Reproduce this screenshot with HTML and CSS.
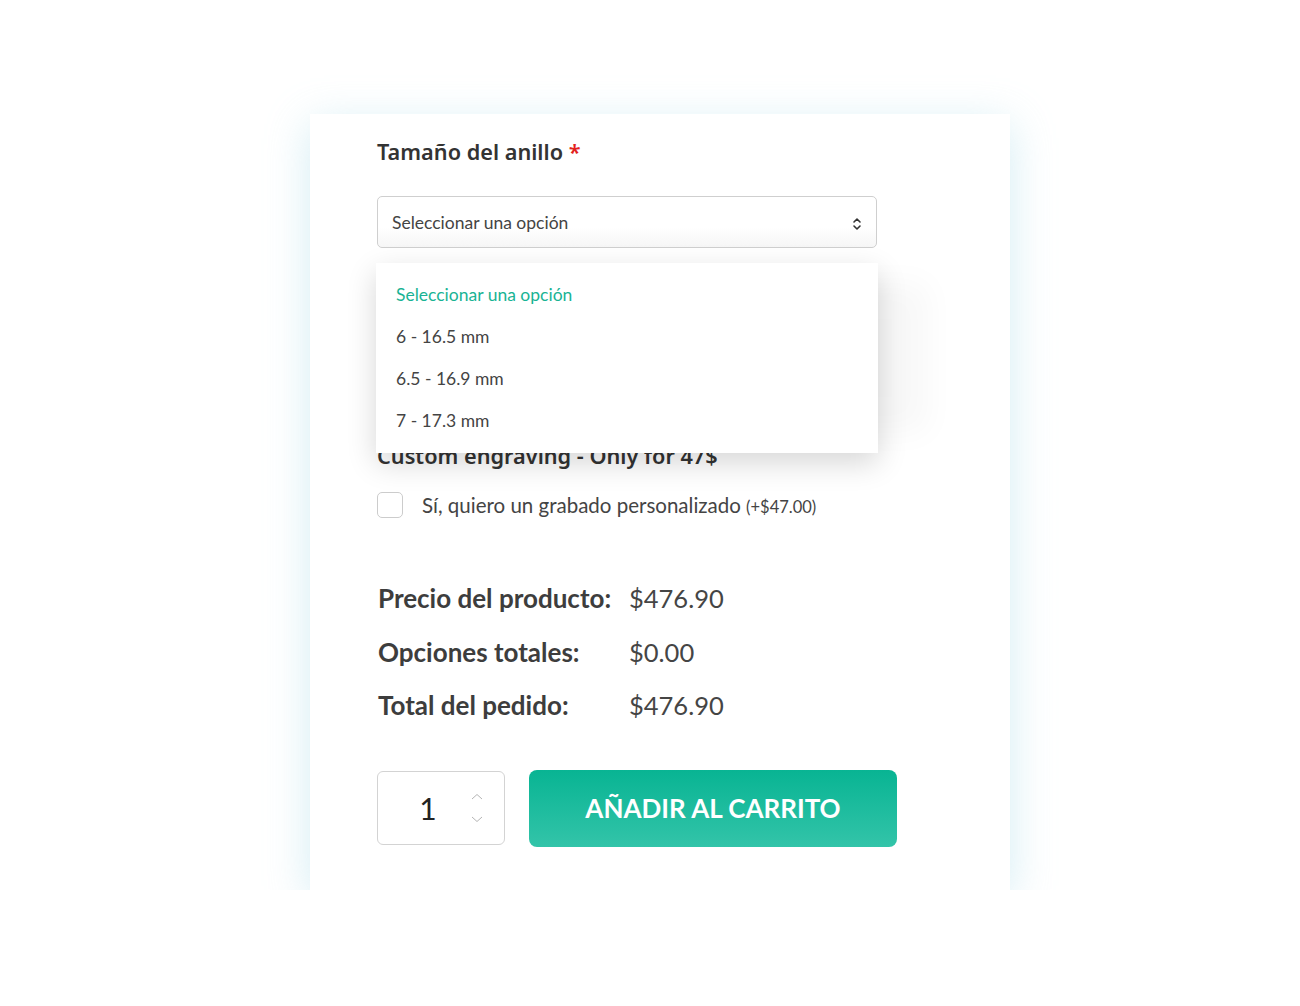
FILE: index.html
```html
<!DOCTYPE html>
<html lang="es">
<head>
  <meta charset="UTF-8" />
  <title>Tamaño del anillo</title>
  <link rel="stylesheet" href="styles.css">
</head>
<body>

  <div class="card">
    <h3 class="field-title">Tamaño del anillo <span class="req">*</span></h3>

    <div class="select-wrap">
      <div class="select-box">
        <span>Seleccionar una opción</span>
        <svg class="select-arrows" width="10" height="16" viewBox="0 0 10 16">
          <path d="M2 6 L5 3 L8 6" fill="none" stroke="#333" stroke-width="1.6" stroke-linecap="round" stroke-linejoin="round"/>
          <path d="M2 10 L5 13 L8 10" fill="none" stroke="#333" stroke-width="1.6" stroke-linecap="round" stroke-linejoin="round"/>
        </svg>
      </div>

      <ul class="dropdown">
        <li class="active">Seleccionar una opción</li>
        <li>6 - 16.5 mm</li>
        <li>6.5 - 16.9 mm</li>
        <li>7 - 17.3 mm</li>
      </ul>
    </div>

    <h3 class="field-title engraving">Custom engraving - Only for 47$</h3>

    <label class="check-row">
      <span class="checkbox"></span>
      <span>Sí, quiero un grabado personalizado <small>(+$47.00)</small></span>
    </label>

    <div class="totals">
      <div class="t-label">Precio del producto:</div>
      <div class="t-value">$476.90</div>
      <div class="t-label">Opciones totales:</div>
      <div class="t-value">$0.00</div>
      <div class="t-label">Total del pedido:</div>
      <div class="t-value">$476.90</div>
    </div>

    <div class="actions">
      <div class="qty">
        <span class="qty-num">1</span>
        <div class="spin">
          <svg width="12" height="8" viewBox="0 0 12 8"><path d="M1 6 L6 1.5 L11 6" fill="none" stroke="#b5b5b5" stroke-width="1"/></svg>
          <svg width="12" height="8" viewBox="0 0 12 8"><path d="M1 2 L6 6.5 L11 2" fill="none" stroke="#b5b5b5" stroke-width="1"/></svg>
        </div>
      </div>
      <button class="add-btn">AÑADIR AL CARRITO</button>
    </div>
  </div>

</body>
</html>
```

FILE: styles.css
```css
body {
  margin: 0;
  background: #fff;
  font-family: Lato, "Open Sans", sans-serif;
  color: #3d3d3d;
}

.card {
  box-sizing: border-box;
  width: 700px;
  height: 776px;
  margin: 114px 0 0 310px;
  padding: 24px 0 0 67px;
  background: #fff;
  box-shadow: 0 10px 40px rgba(160, 215, 230, 0.45);
}

.field-title {
  margin: 0;
  font-family: "Noto Sans", sans-serif;
  font-size: 21.7px;
  font-weight: 600;
  line-height: 28px;
  color: #333;
}

.req {
  color: #e2211c;
}

.select-wrap {
  position: relative;
  width: 500px;
  margin-top: 30px;
}

.select-box {
  box-sizing: border-box;
  height: 52px;
  display: flex;
  align-items: center;
  justify-content: space-between;
  padding: 0 14px;
  border: 1px solid #cfcfcf;
  border-radius: 5px;
  font-size: 17.5px;
  color: #444;
  background: linear-gradient(#fff 60%, #f6f6f6);
}

.select-arrows {
  margin-top: 3px;
}

.dropdown {
  position: absolute;
  top: 67px;
  left: -1px;
  width: 502px;
  margin: 0;
  padding: 11px 0;
  list-style: none;
  background: #fff;
  box-shadow: 0 10px 28px rgba(0, 0, 0, 0.16), 70px 0 30px -20px rgba(0, 0, 0, 0.03);
  z-index: 2;
}

.dropdown li {
  height: 42px;
  line-height: 42px;
  padding-left: 20px;
  font-size: 17.5px;
  color: #444;
}

.dropdown li.active {
  color: #19b394;
}

.engraving {
  margin-top: 194px;
}

.check-row {
  display: flex;
  align-items: center;
  gap: 19px;
  margin-top: 22px;
  font-size: 20.5px;
  color: #444;
}

.checkbox {
  width: 24px;
  height: 24px;
  border: 1px solid #ccc;
  border-radius: 5px;
}

.check-row small {
  font-size: 16.5px;
}

.totals {
  display: grid;
  grid-template-columns: 251px auto;
  margin-top: 54px;
  margin-left: 1px;
  line-height: 53.5px;
  font-size: 25.5px;
  color: #3d3d3d;
}

.t-label {
  font-size: 26px;
  font-weight: 700;
}

.t-value {
  color: #454545;
}

.actions {
  display: flex;
  align-items: center;
  gap: 24px;
  margin-top: 37px;
}

.qty {
  box-sizing: border-box;
  width: 128px;
  height: 74px;
  display: flex;
  align-items: center;
  border: 1px solid #d3d3d3;
  border-radius: 6px;
}

.qty-num {
  width: 100px;
  text-align: center;
  font-size: 30px;
  color: #222;
}

.spin {
  display: flex;
  flex-direction: column;
  gap: 14px;
  margin-left: -7px;
}

.add-btn {
  width: 368px;
  height: 77px;
  border: none;
  border-radius: 8px;
  background: linear-gradient(#08b493, #33c4a9);
  color: #fff;
  font-family: Lato, sans-serif;
  font-size: 26px;
  font-weight: 700;
  cursor: pointer;
}
```
